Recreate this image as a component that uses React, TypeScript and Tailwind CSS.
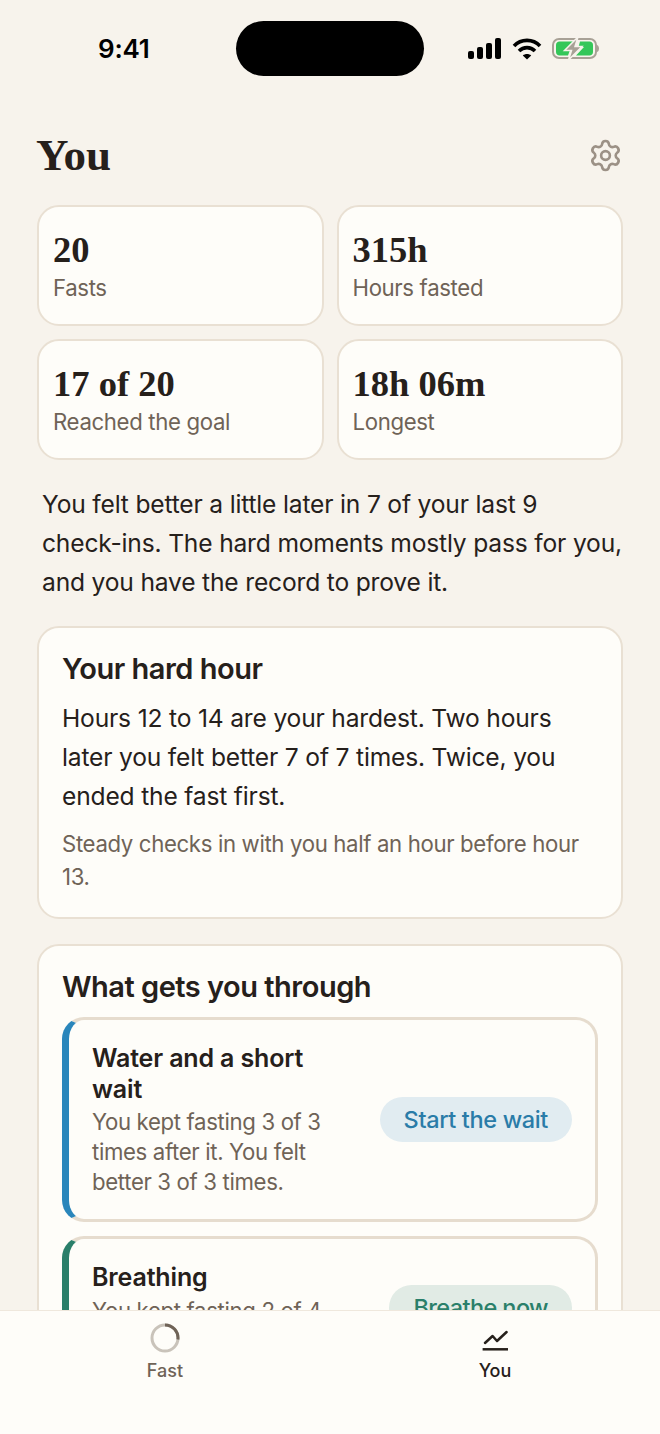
import React from 'react';
import { Settings } from 'lucide-react';

const SERIF = "font-['Liberation_Serif',serif]";

const STATS = [
  { value: '20', label: 'Fasts' },
  { value: '315h', label: 'Hours fasted' },
  { value: '17 of 20', label: 'Reached the goal' },
  { value: '18h 06m', label: 'Longest' },
];

const StatusBar = () => (
  <div className="relative h-[96px] shrink-0">
    <span className="absolute left-[98px] top-[32px] text-[26px] leading-[33px] font-semibold tracking-[-0.2px] text-black">9:41</span>
    <div className="absolute left-[236px] top-[21px] h-[55px] w-[188px] rounded-[28px] bg-black" />
    <svg className="absolute left-[468px] top-[38px]" width="34" height="21" viewBox="0 0 34 21" fill="#000">
      <rect x="0" y="13" width="6" height="8" rx="2" />
      <rect x="9" y="9" width="6" height="12" rx="2" />
      <rect x="18" y="5" width="6" height="16" rx="2" />
      <rect x="27" y="0" width="6" height="21" rx="2" />
    </svg>
    <svg className="absolute left-[512px] top-[38px]" width="30" height="22" viewBox="0 0 30 22" fill="none" stroke="#000" strokeWidth="3.6">
      <path d="M2 8 C9 0.5 21 0.5 28 8" />
      <path d="M7 13 C11.5 8.5 18.5 8.5 23 13" />
      <path d="M15 21.5 L10.8 17.4 C13 15.4 17 15.4 19.2 17.4 Z" fill="#000" stroke="none" />
    </svg>
    <svg className="absolute left-[552px] top-[36px]" width="47" height="25" viewBox="0 0 47 25" fill="none">
      <rect x="1" y="3" width="43" height="19" rx="6" stroke="#A8A196" strokeWidth="2" />
      <path d="M45 9 C46.500 9.5 47 11 47 12.5 C47 14 46.500 15.500 45 16 Z" fill="#A8A196" />
      <path d="M7.500 5.500 H21 L13 14 H18 L16 19.500 H7.500 C5.500 19.500 4 18 4 16 V9 C4 7 5.500 5.500 7.500 5.500 Z" fill="#34C759" />
      <path d="M28 5.500 H37.500 C39.500 5.500 41 7 41 9 V16 C41 18 39.500 19.500 37.500 19.500 H24 L32 11 H26.500 Z" fill="#34C759" />
      <path d="M26 1 L12.500 14.500 H19.500 L16.500 24 L30 10.500 H23 Z" fill="#A8A196" stroke="#F7F3EC" strokeWidth="1.500" />
    </svg>
  </div>
);

const ToolCard = ({ title, body, action, accent, pill, ink }: { title: string; body: string; action: string; accent: string; pill: string; ink: string }) => (
  <div className={`flex items-center gap-[20px] rounded-[22px] border-[3px] border-l-[7px] border-[#E6DCCE] bg-[#FEFDF9] pb-[22px] pl-[23px] pr-[23px] pt-[23px] ${accent}`}>
    <div className="min-w-0 flex-1">
      <div className="max-w-[240px] text-[25px] leading-[30.500px] font-semibold tracking-[-0.15px] text-[#26201B]">{title}</div>
      <div className="mt-[3px] text-[22.200px] leading-[30px] tracking-[-0.35px] text-[#6F6357]">{body}</div>
    </div>
    <button className={`mb-[2px] shrink-0 rounded-full px-[24px] py-[6px] text-[23.500px] leading-[33px] font-medium ${pill} ${ink}`}>{action}</button>
  </div>
);

export default function App() {
  return (
    <div className="flex h-[1434px] w-[660px] flex-col overflow-hidden bg-[#F7F3EC] font-['Inter',sans-serif]">
      <main className="min-h-0 flex-1 overflow-hidden">
        <StatusBar />
        <div className="flex flex-col px-[37px]">
          <div className="mb-[6px] mt-[15px] flex h-[88px] items-center justify-between">
            <h1 className={`${SERIF} ml-[-1px] text-[45px] leading-[52px] font-bold text-[#26201B]`}>You</h1>
            <Settings size={35} strokeWidth={1.800} className="text-[#9C9186]" />
          </div>

          <div className="grid grid-cols-2 gap-[13px]">
            {STATS.map((s) => (
              <div key={s.label} className="flex h-[121px] flex-col justify-center rounded-[22px] border-2 border-[#E9E0D3] bg-[#FEFDF9] pl-[14px]">
                <div className={`${SERIF} text-[36.500px] leading-[42px] font-bold text-[#26201B]`}>{s.value}</div>
                <div className="mt-[1px] text-[22.200px] leading-[31px] tracking-[-0.35px] text-[#6F6357]">{s.label}</div>
              </div>
            ))}
          </div>

          <p className="mt-[25px] pl-[5px] text-[24.600px] leading-[39px] tracking-[-0.18px] text-[#26201B]">
            You felt better a little later in 7 of your last 9 <span className="whitespace-nowrap">check-ins.</span> The hard moments mostly pass for you, and you have the record to prove it.
          </p>

          <section className="mt-[24px] rounded-[22px] border-2 border-[#E9E0D3] bg-[#FEFDF9] px-[23px] pb-[24px] pt-[22px]">
            <h2 className="text-[29px] leading-[38px] font-semibold tracking-[-0.5px] text-[#26201B]">Your hard hour</h2>
            <p className="mt-[11px] text-[24.600px] leading-[39px] tracking-[-0.18px] text-[#26201B]">
              Hours 12 to 14 are your hardest. Two hours later you felt better 7 of 7 times. Twice, you ended the fast first.
            </p>
            <p className="mt-[11px] text-[22.200px] leading-[33px] tracking-[-0.35px] text-[#6F6357]">
              Steady checks in with you half an hour before hour 13.
            </p>
          </section>

          <section className="mt-[25px] rounded-[22px] border-2 border-[#E9E0D3] bg-[#FEFDF9] px-[23px] pt-[22px]">
            <h2 className="mb-[11px] text-[29px] leading-[38px] font-semibold tracking-[-0.5px] text-[#26201B]">What gets you through</h2>
            <div className="flex flex-col gap-[14px]">
              <ToolCard
                title="Water and a short wait"
                body="You kept fasting 3 of 3 times after it. You felt better 3 of 3 times."
                action="Start the wait"
                accent="border-l-[#2A86BB]"
                pill="bg-[#E1ECF1]"
                ink="tracking-[-0.35px] text-[#2A7CA8]"
              />
              <ToolCard
                title="Breathing"
                body="You kept fasting 2 of 4 times."
                action="Breathe now"
                accent="border-l-[#2A7F6A]"
                pill="bg-[#E1EBE5]"
                ink="tracking-[-0.6px] text-[#2A7F6A]"
              />
            </div>
          </section>
        </div>
      </main>

      <nav className="flex h-[124px] shrink-0 items-start border-t border-[#EFE8DD] bg-[#FEFDF9]">
        <div className="flex flex-1 flex-col items-center pt-[12px]">
          <svg width="30" height="30" viewBox="0 0 30 30" fill="none">
            <circle cx="15" cy="15" r="13" stroke="#C9C3BA" strokeWidth="3" />
            <path d="M15 2 A13 13 0 0 1 27.900 16.500" stroke="#6F6357" strokeWidth="3" />
          </svg>
          <span className="mt-[6px] text-[18px] leading-[24px] font-medium text-[#6F6357]">Fast</span>
        </div>
        <div className="flex flex-1 flex-col items-center pt-[12px]">
          <svg width="30" height="30" viewBox="0 0 30 30" fill="none" stroke="#26201B" strokeLinecap="round" strokeLinejoin="round">
            <path d="M5 20 L12.600 13 L17 18 L26.600 9" strokeWidth="2.500" />
            <path d="M2.600 26.300 H28" strokeWidth="2.500" strokeLinecap="butt" />
          </svg>
          <span className="mt-[6px] text-[18px] leading-[24px] font-medium text-[#26201B]">You</span>
        </div>
      </nav>
    </div>
  );
}
